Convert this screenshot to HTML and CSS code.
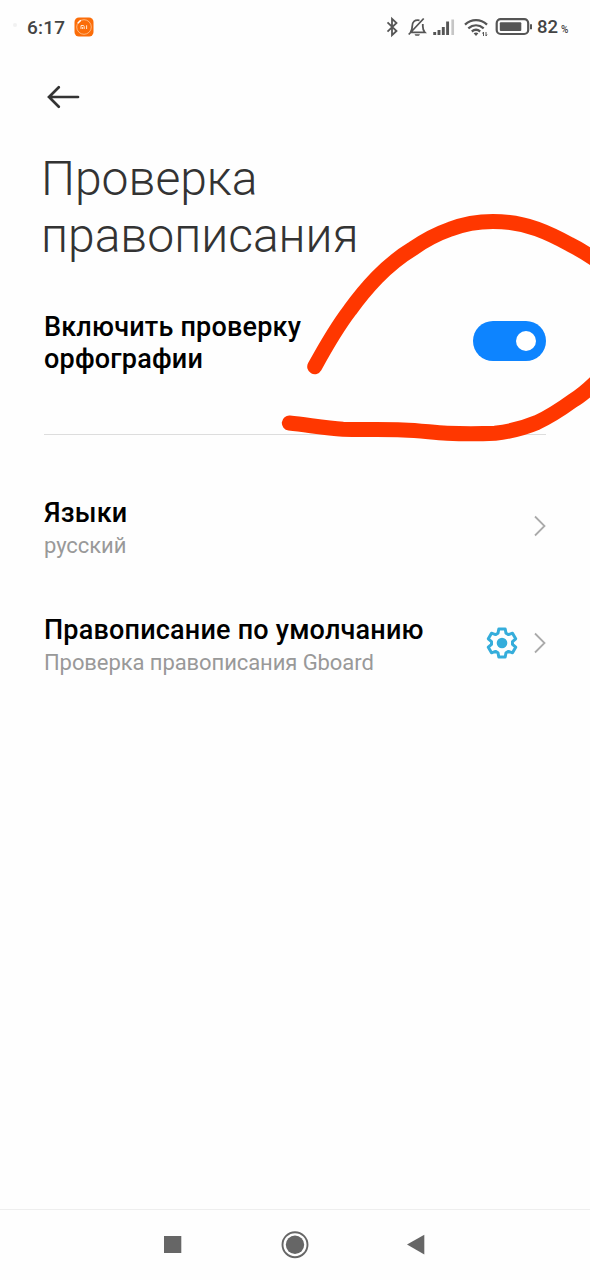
FILE: index.html
```html
<!DOCTYPE html>
<html lang="ru">
<head>
<meta charset="utf-8">
<title>Проверка правописания</title>
<link rel="stylesheet" href="styles.css">
</head>
<body>
<div class="screen">
  <header class="status">
    <span class="camera"></span>
    <span class="clock">6:17</span>
    <svg class="app-badge" viewBox="0 0 20 20">
      <rect x=".5" y=".5" width="19" height="19" rx="4.5" fill="#fb6d09"/>
      <circle cx="10" cy="10" r="7.3" fill="none" stroke="#ffc899" stroke-width=".8"/>
      <path d="M3.8 6.2l3-3" stroke="#fff" stroke-width="1.5"/>
      <path d="M7 12V8.500h2.200q1 0 1 1V12M8.600 12V10M12.600 8.300V12" fill="none" stroke="#ffe5cf" stroke-width="1"/>
    </svg>
    <svg class="status-icons" viewBox="0 0 146 24" fill="none" stroke="#555">
      <path d="M1.500 7.300l9 8.700-4.500 4.200V3.800L10.500 8 1.500 16.700" stroke-width="1.800"/>
      <path d="M24.500 17.300h14.300c-1.700-1.700-2-3-2-6V9M33.500 5.300c-5-.8-7.300 1.700-7.300 6.200 0 2.800-.5 4.300-1.700 5.800M22.700 19.500L37.700 3.500" stroke-width="1.800"/>
      <path d="M28.500 19.200h5.500l-1 1.500h-3.500z" fill="#555" stroke="none"/>
      <path d="M48.700 20v-3M53 20v-5M57.300 20v-8M61.600 20V6.500" stroke-width="2.900"/>
      <path d="M66.700 20V4.500" stroke="#c6c6c6" stroke-width="2.700"/>
      <path d="M79 9.700c6.400-6 15.600-6 22 0M82.300 13.300c4.700-4 10.700-4 15.400 0M85.800 16.500c2.800-2.300 5.600-2.300 8.400 0" stroke-width="2.300"/>
      <path d="M87.600 18.300q2.400-1.600 4.800 0L90 21z" fill="#555" stroke="none"/>
      <path d="M97.500 17v4M96.500 18.500l1-1.500M100 17v4M101 19.500l-1 1.500" stroke-width="1"/>
      <rect x="110.700" y="4.200" width="31.500" height="14.800" rx="4" stroke-width="2.200"/>
      <rect x="113.800" y="7.200" width="21.500" height="8.800" rx="1" fill="#555" stroke="none"/>
      <path d="M145 9.200v5" stroke-width="2"/>
    </svg>
    <span class="battery">82</span><span class="percent">%</span>
  </header>

  <nav class="toolbar">
    <svg class="back" viewBox="0 0 34 24" fill="none" stroke="#333" stroke-width="2.700" stroke-linecap="round">
      <path d="M12.800 2.200L3 12l9.800 9.800M3 12h29"/>
    </svg>
  </nav>

  <h1 class="title">Проверка<br>правописания</h1>

  <main class="settings">
    <section class="row row-toggle">
      <div class="name">Включить проверку<br>орфографии</div>
      <div class="toggle"><span class="knob"></span></div>
    </section>
    <section class="row row-languages">
      <div class="label">
        <div class="name">Языки</div>
        <div class="value">русский</div>
      </div>
      <svg class="chevron" viewBox="0 0 12 22"><path d="M1 1.500L10.500 11 1 20.500"/></svg>
    </section>
    <section class="row row-default">
      <div class="label">
        <div class="name">Правописание по умолчанию</div>
        <div class="value">Проверка правописания Gboard</div>
      </div>
      <svg class="gear" viewBox="0 0 32 32">
        <path d="M12.800 2H19.200L20 6.200L22.500 7.600L26.500 6.200L29.700 11.800L26.500 14.600V17.400L29.700 20.200L26.500 25.800L22.500 24.400L20 25.800L19.200 30H12.800L12 25.800L9.500 24.400L5.500 25.800L2.300 20.200L5.500 17.400V14.600L2.300 11.800L5.500 6.200L9.500 7.600L12 6.200Z" fill="none" stroke="#35addb" stroke-width="3" stroke-linejoin="round"/>
        <circle cx="16" cy="16" r="5.300" fill="#35addb"/>
      </svg>
      <svg class="chevron" viewBox="0 0 12 22"><path d="M1 1.500L10.500 11 1 20.500"/></svg>
    </section>
  </main>

  <footer class="navbar">
    <svg class="nav-icon" viewBox="0 0 28 28"><path d="M5 5h17.300v17H5z" fill="#666"/></svg>
    <svg class="nav-icon" viewBox="0 0 28 28"><circle cx="14" cy="13.700" r="12.500" fill="none" stroke="#666" stroke-width="1.900"/><circle cx="14" cy="13.700" r="9.200" fill="#666"/></svg>
    <svg class="nav-icon" viewBox="0 0 28 28"><path d="M4 13.600L21.300 3.800v19.700z" fill="#666"/></svg>
  </footer>

  <svg class="scribble" viewBox="0 0 590 1280">
    <path d="M314.700 366.700C326 346 337 327 350 310Q363 292 377 277.500Q394 260 413 248.500Q431 236 450 229.300Q470 221.500 493 221.500Q516 221.500 537 229Q552 234.500 570 244.500Q582 250.500 596 260"/>
    <path d="M289.300 423C308 425 325 428 343 429.300C363 430 383 429 403 430C420 430.500 432 432.500 447 433.300Q471 434.300 495 433.300Q518 430.500 537 422.500Q553 415 573 400.500Q582 395.500 596 382"/>
  </svg>
</div>
</body>
</html>
```
FILE: styles.css
```css
* { box-sizing: border-box; }
body {
  margin: 0;
  background: #fefefe;
  font-family: Roboto, "Noto Sans", sans-serif;
}
svg { display: block; flex: none; }
.screen {
  position: relative;
  display: flex;
  flex-direction: column;
  width: 590px;
  height: 1280px;
  overflow: hidden;
}
.status {
  display: flex;
  align-items: center;
  height: 54px;
  padding-left: 13px;
  color: #444;
  font-weight: 500;
}
.camera {
  width: 4px;
  height: 4px;
  margin: 0 10px 4px 0;
  border-radius: 50%;
  background: #f1f1f1;
}
.clock { width: 47px; font-size: 19px; letter-spacing: .2px; }
.app-badge { width: 20px; height: 20px; margin-bottom: 1px; }
.status-icons { width: 146px; height: 24px; margin: 0 5px 0 292px; }
.battery { width: 24px; font-size: 18.5px; }
.percent { font-size: 10px; padding-top: 5px; }
.toolbar {
  display: flex;
  align-items: center;
  height: 86px;
  padding-left: 46px;
}
.back { width: 34px; height: 24px; }
.title {
  height: 147px;
  margin: 0;
  padding: 11px 0 0 41px;
  color: #333;
  font-size: 48px;
  font-weight: 300;
  line-height: 56.5px;
}
.settings { flex: 1; padding: 0 44px; }
.row { display: flex; }
.name {
  color: #000;
  font-size: 27px;
  font-weight: 500;
  line-height: 32px;
  letter-spacing: .2px;
}
.row-toggle {
  height: 148px;
  justify-content: space-between;
  padding-top: 24px;
  border-bottom: 1px solid #ddd;
}
.toggle {
  display: flex;
  justify-content: flex-end;
  align-items: center;
  width: 73px;
  height: 40px;
  margin-top: 10px;
  padding-right: 10px;
  border-radius: 20px;
  background: #0d84ff;
}
.knob { width: 20px; height: 20px; border-radius: 50%; background: #fff; }
.row-languages { padding-top: 62px; }
.row-default { padding-top: 54px; }
.label { flex: 1; height: 63px; }
.value {
  padding-top: 3px;
  color: #999;
  font-size: 22px;
  line-height: 28px;
  letter-spacing: -.08px;
}
.chevron {
  width: 12px;
  height: 22px;
  margin-top: 18px;
  fill: none;
  stroke: #aaa;
  stroke-width: 1.8;
}
.gear { width: 32px; height: 32px; margin: 13px 16px 0 0; }
.navbar {
  display: flex;
  justify-content: center;
  gap: 94px;
  height: 71px;
  padding-top: 21px;
  border-top: 1px solid #eee;
}
.nav-icon { width: 28px; height: 28px; }
.scribble {
  position: absolute;
  inset: 0;
  width: 590px;
  height: 1280px;
  fill: none;
  stroke: #ff3700;
  stroke-width: 15;
  stroke-linecap: round;
  stroke-linejoin: round;
  pointer-events: none;
}
```
